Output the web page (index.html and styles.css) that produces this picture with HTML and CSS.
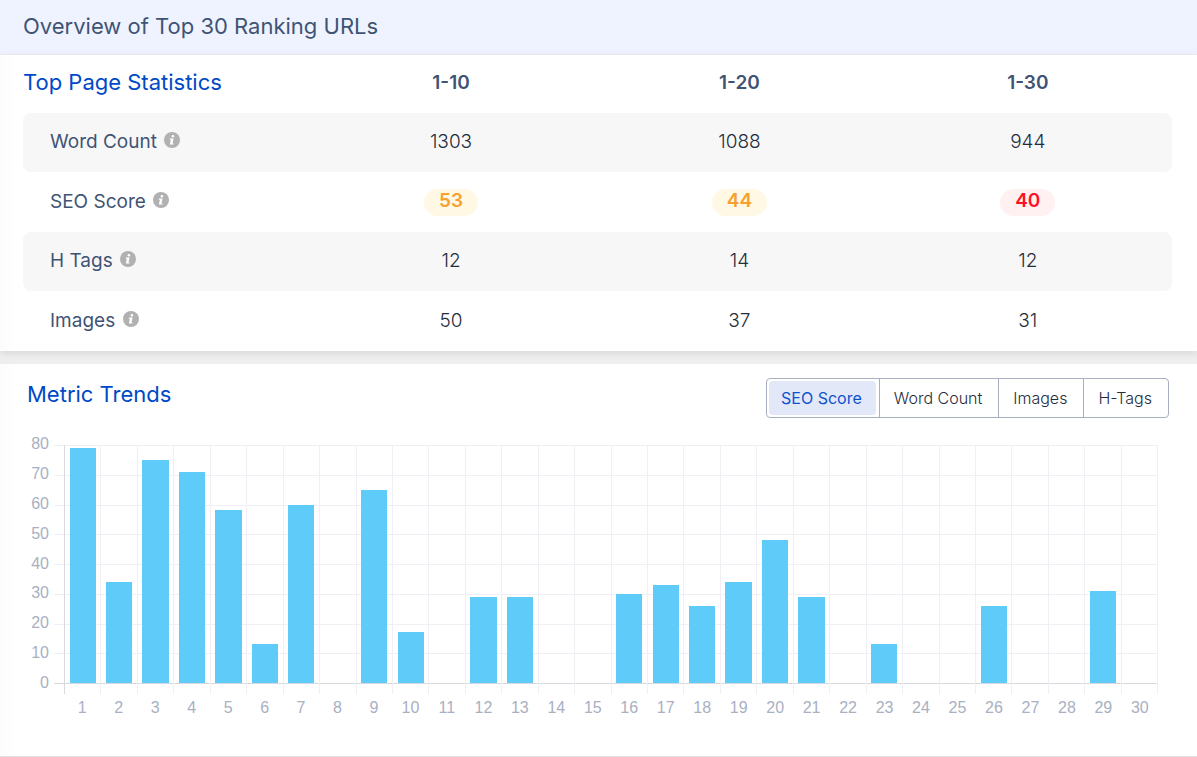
FILE: index.html
```html
<!DOCTYPE html>
<html lang="en">
<head>
<meta charset="utf-8">
<meta name="viewport" content="width=device-width, initial-scale=1">
<title>Overview of Top 30 Ranking URLs</title>
<link rel="stylesheet" href="styles.css">
</head>
<body>
<svg class="sprite" aria-hidden="true">
  <symbol id="info" viewBox="0 0 16 16">
    <circle cx="8" cy="8" r="8" fill="#b1b1b1"/>
    <circle cx="8.9" cy="4.2" r="1.3" fill="#fff"/>
    <path d="M6 6.500h3.600L8.500 11.400h1.200l-.3 1.100H5.800l1.100-4.800H5.700z" fill="#fff"/>
  </symbol>
</svg>
<main class="page">
  <header class="page-header"><h1 class="page-title">Overview of Top 30 Ranking URLs</h1></header>
  <section class="stats">
    <table class="stats-table">
      <thead>
        <tr><th class="stats-title" scope="col">Top Page Statistics</th><th class="range" scope="col">1-10</th><th class="range" scope="col">1-20</th><th class="range" scope="col">1-30</th></tr>
      </thead>
      <tbody>
        <tr><th class="metric" scope="row">Word Count <svg class="info"><use href="#info"/></svg></th><td>1303</td><td>1088</td><td>944</td></tr>
        <tr><th class="metric" scope="row">SEO Score <svg class="info"><use href="#info"/></svg></th><td><span class="score score-mid">53</span></td><td><span class="score score-mid">44</span></td><td><span class="score score-low">40</span></td></tr>
        <tr><th class="metric" scope="row">H Tags <svg class="info"><use href="#info"/></svg></th><td>12</td><td>14</td><td>12</td></tr>
        <tr><th class="metric" scope="row">Images <svg class="info"><use href="#info"/></svg></th><td>50</td><td>37</td><td>31</td></tr>
      </tbody>
    </table>
  </section>
  <section class="trends">
    <div class="trends-header">
      <h2 class="trends-title">Metric Trends</h2>
      <div class="tabs">
        <button class="tab tab-active" type="button" aria-pressed="true">SEO Score</button>
        <button class="tab" type="button" aria-pressed="false">Word Count</button>
        <button class="tab" type="button" aria-pressed="false">Images</button>
        <button class="tab" type="button" aria-pressed="false">H-Tags</button>
      </div>
    </div>
    <div class="chart">
      <div class="y-axis"><span>80</span><span>70</span><span>60</span><span>50</span><span>40</span><span>30</span><span>20</span><span>10</span><span>0</span></div>
      <div class="grid-rows"><i></i><i></i><i></i><i></i><i></i><i></i><i></i><i></i><i></i></div>
      <div class="plot" id="plot"></div>
      <div class="x-axis" id="x-axis"></div>
    </div>
  </section>
</main>
<script src="chart.js"></script>
</body>
</html>
```
FILE: styles.css
```css
* { box-sizing: border-box; }

body {
  margin: 0;
  font-family: Inter, "Liberation Sans", sans-serif;
  color: #3f5475;
  background: #eee;
}

.sprite { position: absolute; width: 0; height: 0; }

.page {
  display: flex;
  flex-direction: column;
  min-height: 100vh;
}

.page-header {
  padding: 12px 23px 14px;
  background: #eff3ff;
  border-bottom: 1px solid #eceef3;
}

.page-title,
.trends-title,
.stats-title {
  margin: 0;
  font-size: 22px;
  line-height: 28px;
  font-weight: 400;
}

.stats {
  padding: 0 25px 0 23px;
  background: linear-gradient(90deg, #fcfcfc, #fff 14px);
  box-shadow: 0 2px 8px rgba(0, 0, 0, 0.1);
}

.stats-table {
  width: 100%;
  table-layout: fixed;
  border-collapse: separate;
  border-spacing: 0;
}

.stats-title { padding: 0 0 4px; color: #0049c6; text-align: left; }

.range {
  width: 25.1%;
  height: 58px;
  padding: 0 0 4px;
  font-size: 19px;
  font-weight: 600;
}

.metric,
.stats-table td {
  height: 59px;
  padding: 0 0 2px;
  font-size: 19px;
  line-height: 24px;
}

.metric { padding-left: 27px; font-weight: 400; text-align: left; }
.stats-table td { font-weight: 300; text-align: center; color: #1f2d3d; }

tbody tr:nth-child(even) > * { height: 60px; padding-bottom: 0; }
tbody tr:nth-child(odd) > * { background: #f7f7f7; }
tbody tr > :first-child { border-radius: 8px 0 0 8px; }
tbody tr > :last-child { border-radius: 0 8px 8px 0; }

.info { width: 16px; height: 16px; margin-left: 2px; }

.score {
  display: inline-block;
  padding: 0 15px 3px;
  border-radius: 14px;
  font-weight: 600;
}

.score-mid { color: #f7a02e; background: #fff8e5; }
.score-low { color: #ff1024; background: #fff1f1; }

.trends {
  flex: 1;
  margin-top: 13px;
  padding: 14px 28px 24px 27px;
  background: linear-gradient(90deg, #fcfcfc, #fff 14px);
  border-bottom: 1px solid #e2e2e2;
  position: relative;
}

.trends-header {
  display: flex;
  justify-content: space-between;
  align-items: flex-start;
}

.trends-title { padding-top: 2px; color: #0049c6; }

.tabs {
  display: flex;
  border: 1px solid #a9afc0;
  border-radius: 4px;
}

.tab {
  height: 38px;
  padding: 0 16px 0 14px;
  border: 0;
  border-left: 1px solid #a9afc0;
  background: none;
  font: 300 16px/20px Inter, "Liberation Sans", sans-serif;
  color: #1f2d3d;
}

.tab-active {
  height: 34px;
  margin: 2px 3px 2px 2px;
  padding: 0 14px 0 12px;
  border: 0;
  border-radius: 4px;
  background: #e2e8f7;
  color: #0f52cf;
  font-weight: 400;
}

.chart {
  display: grid;
  grid-template-columns: 22px 5px 10px 1fr;
  grid-template-rows: 239px 10px 26px;
  margin-top: 27px;
  padding-right: 11px;
  font: 16px/18px "Liberation Sans", Arial, sans-serif;
  color: #a9b0c2;
}

.y-axis {
  grid-area: 1 / 1;
  display: flex;
  flex-direction: column;
  justify-content: space-between;
  align-items: flex-end;
  margin: -10px 0 -8px;
}

.grid-rows {
  grid-area: 1 / 3 / 2 / 5;
  display: flex;
  flex-direction: column;
  justify-content: space-between;
}

.grid-rows i { height: 1px; background: #efeff5; }
.grid-rows i:last-child { background: #d8d9df; }

.plot {
  grid-area: 1 / 4 / 3 / 5;
  display: flex;
  border-right: 1px solid #efeff5;
}

.slot {
  flex: 1;
  display: flex;
  align-items: flex-end;
  justify-content: center;
  padding-bottom: 11px;
  border-left: 1px solid #efeff5;
}

.slot:first-child { border-left-color: #d8d9df; }

.bar { width: 74%; background: #5fcbf9; }

.x-axis {
  grid-area: 3 / 4;
  display: flex;
  padding-top: 5px;
  text-align: center;
}

.x-axis span { flex: 1 0 0; width: 0; }
```
FILE: chart.js
```js
const scores = [79, 34, 75, 71, 58, 13, 60, 0, 65, 17, 0, 29, 29, 0, 0, 30, 33, 26, 34, 48, 29, 0, 13, 0, 0, 26, 0, 0, 31, 0];
const plot = document.getElementById("plot");
const axis = document.getElementById("x-axis");

scores.forEach((score, index) => {
  const slot = document.createElement("div");
  slot.className = "slot";
  const bar = document.createElement("div");
  bar.className = "bar";
  bar.style.height = `${score / 80 * 100}%`;
  slot.append(bar);
  plot.append(slot);

  const label = document.createElement("span");
  label.textContent = index + 1;
  axis.append(label);
});
```
